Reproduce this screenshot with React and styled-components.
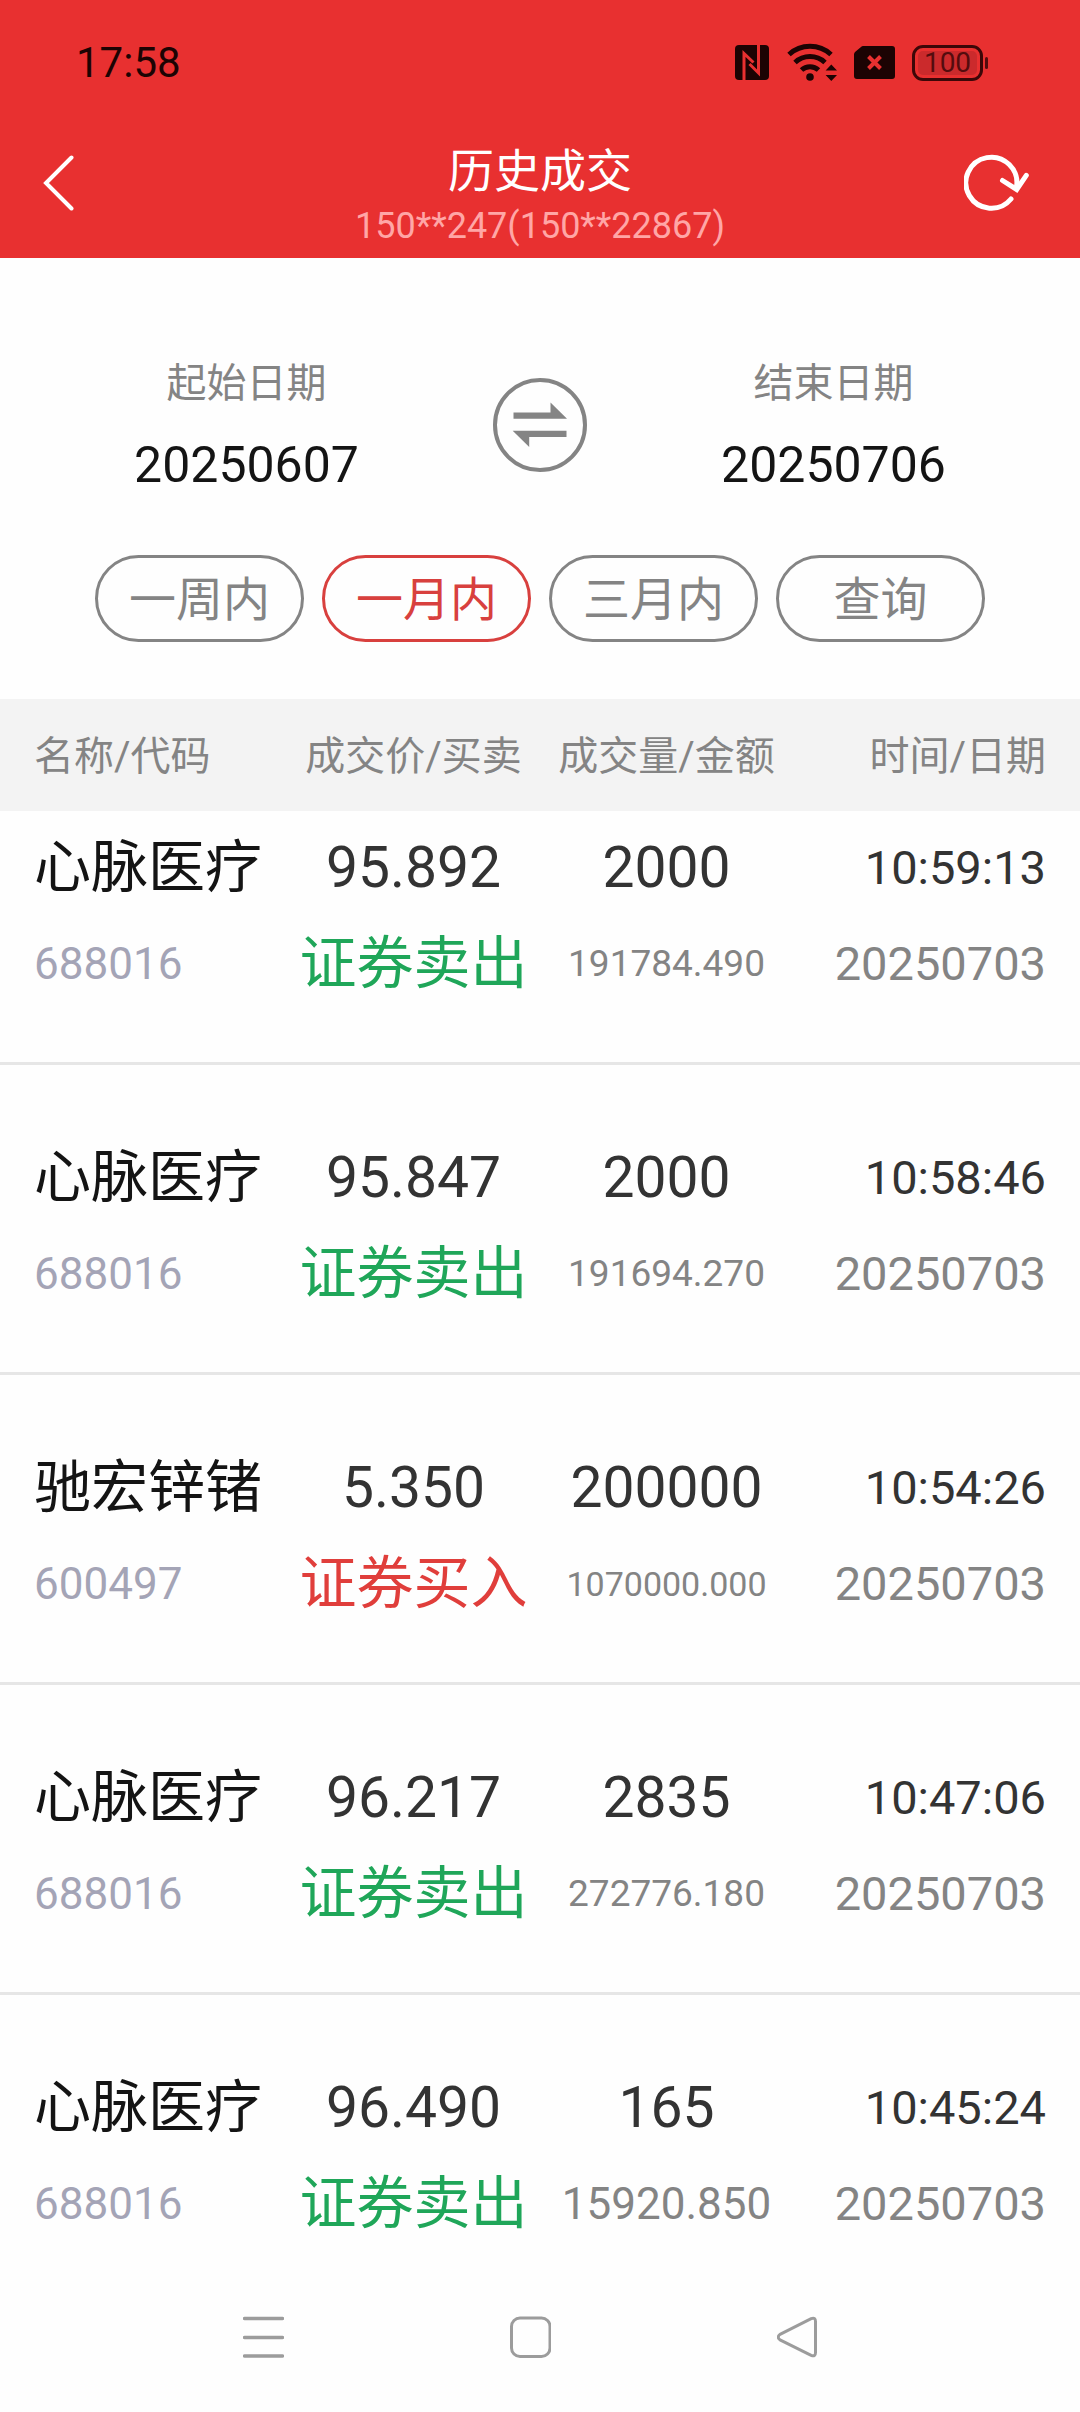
import React, { useState } from 'react'
import styled, { createGlobalStyle } from 'styled-components'

const GlobalStyle = createGlobalStyle`
  :root {
    --clr-brand: #e83030;
    --clr-bg: #fefefe;
    --clr-band: #f3f3f3;
    --clr-line: #e6e6e6;
    --clr-title: #141414;
    --clr-text: #333333;
    --clr-muted: #848484;
    --clr-code: #a4a4b6;
    --clr-active: #d8403e;
    --clr-buy: #e03e3b;
    --clr-sell: #1fa659;
    --clr-status: #1c0303;
  }
  *, *::before, *::after {
    box-sizing: border-box;
  }
  body {
    margin: 0;
    background-color: var(--clr-bg);
    color: var(--clr-text);
    font-family: Roboto, 'Noto Sans CJK SC', sans-serif;
  }
  button, input {
    margin: 0;
    padding: 0;
    border: 0;
    background: none;
    color: inherit;
    font: inherit;
  }
  button {
    cursor: pointer;
  }
  svg {
    display: block;
  }
`

const Page = styled.div`
  min-height: 100vh;
  display: flex;
  flex-direction: column;
`

const Header = styled.header`
  background-color: var(--clr-brand);
`

const StatusBar = styled.div`
  height: 125px;
  padding: 0 92px 0 76px;
  display: flex;
  justify-content: space-between;
  align-items: center;
  color: var(--clr-status);
`

const Clock = styled.time`
  font-size: 42px;
`

const StatusIcons = styled.div`
  display: flex;
  align-items: center;
  gap: 17px;
`

const Battery = styled.div`
  display: flex;
  align-items: center;
  gap: 2px;
  color: #540c0e;
  &::after {
    content: '';
    width: 3px;
    height: 12px;
    border-radius: 2px;
    background-color: #540c0e;
  }
`

const BatteryBody = styled.div`
  height: 36px;
  width: 71px;
  padding: 3px;
  border: 3px solid #3c0708;
  border-radius: 11px;
`

const BatteryLevel = styled.div`
  height: 24px;
  line-height: 24px;
  border-radius: 5px;
  background-color: #cb2a2c;
  font-size: 28px;
  text-align: center;
`

const TitleBar = styled.div`
  padding: 16px 0 7px;
  display: grid;
  grid-template-columns: 1fr auto 1fr;
  align-items: start;
`

const IconButton = styled.button`
  height: 84px;
  padding: 0 50px 0 43px;
  display: flex;
  align-items: center;
  justify-self: ${({ $side }) => $side};
`

const Heading = styled.div`
  text-align: center;
`

const Title = styled.h1`
  margin: 0;
  font-size: 46px;
  line-height: 60px;
  font-weight: 400;
  color: #ffffff;
`

const Account = styled.p`
  margin: 0;
  font-size: 36px;
  line-height: 50px;
  color: #ffa6a6;
`

const Filter = styled.section`
  padding: 95px 0 57px;
`

const DateRange = styled.div`
  display: flex;
  align-items: center;
`

const DateField = styled.label`
  flex: 1;
  min-width: 0;
  display: flex;
  flex-direction: column;
  gap: 18px;
  font-size: 40px;
  line-height: 62px;
  text-align: center;
  color: var(--clr-muted);
`

const DateInput = styled.input`
  width: 100%;
  height: 64px;
  font-size: 50px;
  text-align: center;
  color: var(--clr-title);
`

const Presets = styled.div`
  padding: 58px 95px 0;
  display: grid;
  grid-template-columns: repeat(4, 1fr);
  gap: 18px;
`

const Preset = styled.button`
  height: 87px;
  padding-bottom: 6px;
  border: 3px solid;
  border-radius: 44px;
  font-size: 47px;
  color: ${({ $active }) => ($active ? 'var(--clr-active)' : 'var(--clr-muted)')};
`

const Deals = styled.table`
  width: 100%;
  table-layout: fixed;
  border-collapse: collapse;
`

const HeadRow = styled.tr`
  background-color: var(--clr-band);
`

const HeadCell = styled.th`
  height: 112px;
  padding: 0 0 4px;
  font-size: 40px;
  font-weight: 400;
  white-space: nowrap;
  text-align: ${({ $align }) => $align || 'center'};
  color: var(--clr-muted);
`

const Row = styled.tr`
  border-bottom: 3px solid var(--clr-line);
  /* the list is scrolled a little way under its head */
  &:first-child td {
    padding-top: 9px;
  }
  &:last-child {
    border-bottom: 0;
  }
`

const Cell = styled.td`
  padding: 65px 0 50px;
  text-align: ${({ $align }) => $align || 'center'};
`

const Gutter = styled.col`
  width: 34px;
`

const Line = styled.div`
  height: 96px;
  line-height: 96px;
  white-space: nowrap;
  font-size: ${({ $size }) => $size}px;
  color: var(--clr-${({ $tone }) => $tone});
`

const NavBar = styled.nav`
  margin-top: auto;
  padding: 12px 262px 54px 243px;
  display: flex;
  justify-content: space-between;
  color: #9c9c9c;
`

const columns = [
  { label: '名称/代码', align: 'left' },
  { label: '成交价/买卖' },
  { label: '成交量/金额' },
  { label: '时间/日期', align: 'right' },
]

const deals = [
  { name: '心脉医疗', code: '688016', price: '95.892', side: 'sell', volume: '2000', amount: '191784.490', time: '10:59:13', date: '20250703' },
  { name: '心脉医疗', code: '688016', price: '95.847', side: 'sell', volume: '2000', amount: '191694.270', time: '10:58:46', date: '20250703' },
  { name: '驰宏锌锗', code: '600497', price: '5.350', side: 'buy', volume: '200000', amount: '1070000.000', time: '10:54:26', date: '20250703' },
  { name: '心脉医疗', code: '688016', price: '96.217', side: 'sell', volume: '2835', amount: '272776.180', time: '10:47:06', date: '20250703' },
  { name: '心脉医疗', code: '688016', price: '96.490', side: 'sell', volume: '165', amount: '15920.850', time: '10:45:24', date: '20250703' },
]

const sideLabels = { sell: '证券卖出', buy: '证券买入' }
const presets = ['一周内', '一月内', '三月内', '查询']

// long amounts shrink so that they stay inside their column
const amountSize = amount => {
  if (amount.length > 10) return 34
  return amount.length > 9 ? 37 : 44
}

const NfcIcon = () => (
  <svg width="34" height="35" viewBox="0 0 34 35" fill="none">
    <rect width="34" height="35" rx="4" fill="currentColor" />
    <path d="M9 35V8.5L18.5 17.5" stroke="#e83030" strokeWidth="3" />
    <path d="M23.5 0V28L14.5 19" stroke="#e83030" strokeWidth="3" />
  </svg>
)

const WifiIcon = () => (
  <svg width="51" height="39" viewBox="0 0 51 39" fill="none">
    <g stroke="currentColor" strokeWidth="5">
      <path d="M3 11.5A31 31 0 0 1 45 11.5" />
      <path d="M9 19.5A22 22 0 0 1 39 19.5" />
      <path d="M15.5 27A12.5 12.5 0 0 1 32.5 27" />
    </g>
    <circle cx="24" cy="34" r="3.8" fill="currentColor" />
    <path d="M45.3 21.5L51 27.5H39.6ZM45.3 38L51 32H39.6Z" fill="currentColor" />
  </svg>
)

const SimIcon = () => (
  <svg width="41" height="33" viewBox="0 0 41 33" fill="none">
    <path
      d="M9 0H38Q41 0 41 3V30Q41 33 38 33H3Q0 33 0 30V8.5Q0 7 1 6L7 1Q8 0 9 0Z"
      fill="currentColor"
    />
    <path d="M14.5 10.5L26.5 22.5M26.5 10.5L14.5 22.5" stroke="#e83030" strokeWidth="4" />
  </svg>
)

const BackIcon = () => (
  <svg width="31" height="56" viewBox="0 0 31 56" fill="none">
    <path d="M28.5 2.5L3 28L28.5 53.5" stroke="#fff" strokeWidth="4" strokeLinecap="round" />
  </svg>
)

const RefreshIcon = () => (
  <svg width="66" height="58" viewBox="0 0 66 58" fill="none">
    <g stroke="#fff" strokeWidth="5" strokeLinecap="round">
      <path d="M52.5 33A25.5 25.5 0 1 0 47 45" />
      <path d="M38.5 26.5L52.7 35.5L62.3 21.3" />
    </g>
  </svg>
)

const SwapIcon = () => (
  <svg width="94" height="94" viewBox="0 0 94 94" fill="none">
    <circle cx="47" cy="47" r="45" stroke="#848484" strokeWidth="4" />
    <path d="M20.5 34.5H57.5V24.5L74 40.8H20.5ZM73.5 59H36.2V69L19.7 52.7H73.5Z" fill="#848484" />
  </svg>
)

const MenuIcon = () => (
  <svg width="41" height="42" viewBox="0 0 41 42" fill="none">
    <path
      d="M1.5 2.5H39.5M1.5 21.5H39.5M1.5 40H39.5"
      stroke="currentColor"
      strokeWidth="3.5"
      strokeLinecap="round"
    />
  </svg>
)

const HomeIcon = () => (
  <svg width="41" height="42" viewBox="0 0 41 42" fill="none">
    <rect x="1.5" y="2" width="38.5" height="38.5" rx="8.5" stroke="currentColor" strokeWidth="3" />
  </svg>
)

const ReturnIcon = () => (
  <svg width="41" height="42" viewBox="0 0 41 42" fill="none">
    <path
      d="M34.2 2.6Q38.5 1 38.5 5.5V36.5Q38.5 41 34.2 39.4L3 23.8Q-.5 21.2 3 18.4Z"
      stroke="currentColor"
      strokeWidth="3"
      strokeLinejoin="round"
    />
  </svg>
)

const App = () => {
  const [active, setActive] = useState('一月内')
  const [start, setStart] = useState('20250607')
  const [end, setEnd] = useState('20250706')

  const swapDates = () => {
    setStart(end)
    setEnd(start)
  }

  return (
    <>
      <GlobalStyle />
      <Page>
        <Header>
          <StatusBar>
            <Clock>17:58</Clock>
            <StatusIcons>
              <NfcIcon />
              <WifiIcon />
              <SimIcon />
              <Battery>
                <BatteryBody>
                  <BatteryLevel>100</BatteryLevel>
                </BatteryBody>
              </Battery>
            </StatusIcons>
          </StatusBar>
          <TitleBar>
            <IconButton $side="start" aria-label="返回">
              <BackIcon />
            </IconButton>
            <Heading>
              <Title>历史成交</Title>
              <Account>150**247(150**22867)</Account>
            </Heading>
            <IconButton $side="end" aria-label="刷新">
              <RefreshIcon />
            </IconButton>
          </TitleBar>
        </Header>

        <Filter>
          <DateRange>
            <DateField>
              起始日期
              <DateInput value={start} onChange={e => setStart(e.target.value)} />
            </DateField>
            <button aria-label="交换日期" onClick={swapDates}>
              <SwapIcon />
            </button>
            <DateField>
              结束日期
              <DateInput value={end} onChange={e => setEnd(e.target.value)} />
            </DateField>
          </DateRange>
          <Presets>
            {presets.map(item => (
              <Preset key={item} $active={item === active} onClick={() => setActive(item)}>
                {item}
              </Preset>
            ))}
          </Presets>
        </Filter>

        <Deals>
          <colgroup>
            <Gutter />
            <col span="4" />
            <Gutter />
          </colgroup>
          <thead>
            <HeadRow>
              <td />
              {columns.map(({ label, align }) => (
                <HeadCell key={label} scope="col" $align={align}>
                  {label}
                </HeadCell>
              ))}
              <td />
            </HeadRow>
          </thead>
          <tbody>
            {deals.map(deal => (
              <Row key={deal.time}>
                <td />
                <Cell $align="left">
                  <Line $size={57} $tone="title">{deal.name}</Line>
                  <Line $size={44} $tone="code">{deal.code}</Line>
                </Cell>
                <Cell>
                  <Line $size={57} $tone="text">{deal.price}</Line>
                  <Line $size={57} $tone={deal.side}>{sideLabels[deal.side]}</Line>
                </Cell>
                <Cell>
                  <Line $size={57} $tone="text">{deal.volume}</Line>
                  <Line $size={amountSize(deal.amount)} $tone="muted">{deal.amount}</Line>
                </Cell>
                <Cell $align="right">
                  <Line $size={47} $tone="text">{deal.time}</Line>
                  <Line $size={47} $tone="muted">{deal.date}</Line>
                </Cell>
                <td />
              </Row>
            ))}
          </tbody>
        </Deals>

        <NavBar>
          <button aria-label="最近任务">
            <MenuIcon />
          </button>
          <button aria-label="主屏幕">
            <HomeIcon />
          </button>
          <button aria-label="后退">
            <ReturnIcon />
          </button>
        </NavBar>
      </Page>
    </>
  )
}

export default App
